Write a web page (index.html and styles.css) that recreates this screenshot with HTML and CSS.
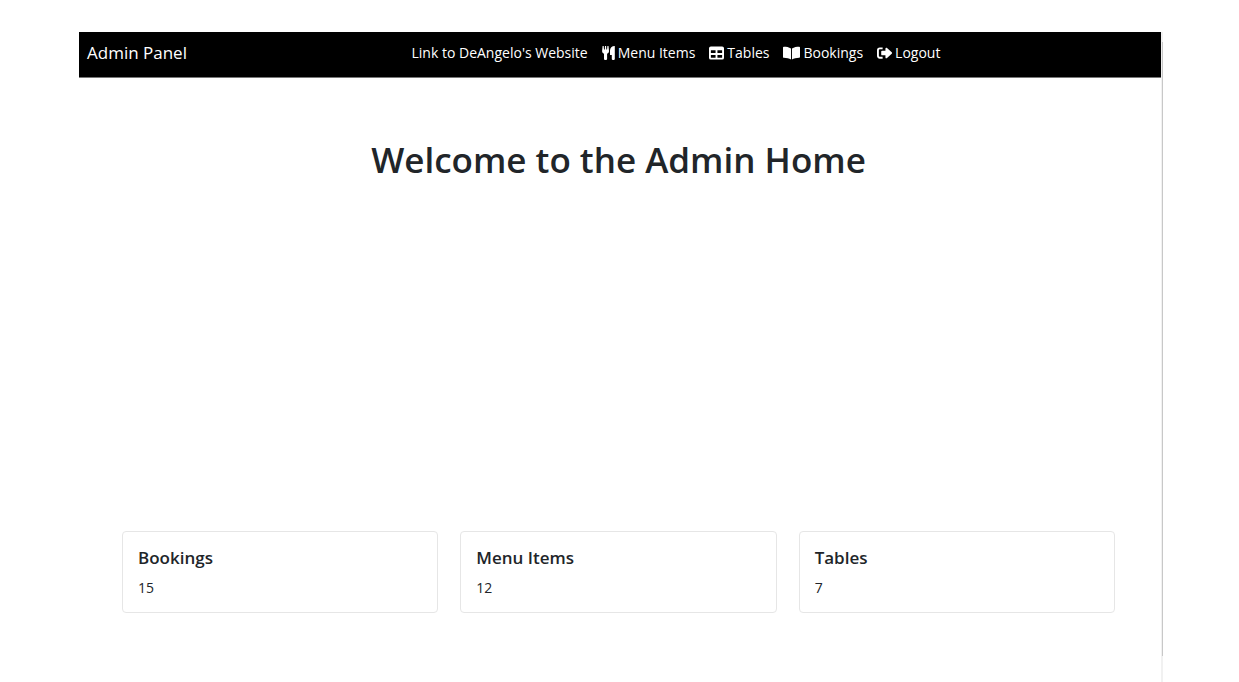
FILE: index.html
```html
<!DOCTYPE html>
<html lang="en">
<head>
<meta charset="utf-8">
<title>Admin Panel</title>
<link rel="stylesheet" href="styles.css">
</head>
<body>
<div class="frame">
  <div class="panel">
    <header class="navbar">
      <a class="brand" href="#">Admin Panel</a>
      <nav class="nav">
        <a class="nav-link" href="#">Link to DeAngelo's Website</a>
        <a class="nav-link" href="#">
          <svg class="icon icon-narrow" viewBox="0 0 13 16" aria-hidden="true"><path d="M.6 1h1.100l.3 3.500h.8L3 1h1.100l.2 3.500h.8L5.400 1h1.100l.5 5c0 1.300-.7 2.200-1.900 2.700V14c0 1.300-3.100 1.300-3.100 0V8.700C.8 8.200.1 7.300.1 6zM12.800 1v13c0 1.300-3 1.300-3 0v-4H8V5.500C8 3 9.800 1 12.800 1z"/></svg>
          <span>Menu Items</span>
        </a>
        <a class="nav-link" href="#">
          <svg class="icon" viewBox="0 0 16 16" aria-hidden="true"><path fill-rule="evenodd" d="M2 1h12a2 2 0 0 1 2 2v10a2 2 0 0 1-2 2H2a2 2 0 0 1-2-2V3a2 2 0 0 1 2-2zM2 5v3h5V5zM9 5v3h5V5zM2 10v3h5v-3zM9 10v3h5v-3z"/></svg>
          <span>Tables</span>
        </a>
        <a class="nav-link" href="#">
          <svg class="icon icon-wide" viewBox="0 0 18 16" aria-hidden="true"><path d="M8.500 3.200v11.600C6.500 13.600 3.900 13.200.9 13.100a.9.9 0 0 1-.9-.9V2.200c0-.5.4-.9.9-.9 2.500 0 5.400.4 7.600 1.900zM9.500 3.200c2.200-1.500 5.100-1.900 7.600-1.900.5 0 .9.4.9.9v10c0 .5-.4.9-.9.900-3 .1-5.600.5-7.600 1.700z"/></svg>
          <span>Bookings</span>
        </a>
        <a class="nav-link" href="#">
          <svg class="icon" viewBox="0 0 16 16" aria-hidden="true"><path d="M6 2v2H3a1 1 0 0 0-1 1v6a1 1 0 0 0 1 1h3v2H3a3 3 0 0 1-3-3V5a3 3 0 0 1 3-3zM15.700 7.300a1 1 0 0 1 0 1.400l-5 4.700c-.7.600-1.700.2-1.700-.7V10.500H5.500a1 1 0 0 1-1-1v-3a1 1 0 0 1 1-1H9V3.300c0-.9 1-1.300 1.700-.7z"/></svg>
          <span>Logout</span>
        </a>
      </nav>
    </header>
    <main class="content">
      <h1 class="title">Welcome to the Admin Home</h1>
      <section class="cards">
        <article class="card"><h2 class="card-title">Bookings</h2><p class="card-count">15</p></article>
        <article class="card"><h2 class="card-title">Menu Items</h2><p class="card-count">12</p></article>
        <article class="card"><h2 class="card-title">Tables</h2><p class="card-count">7</p></article>
      </section>
    </main>
  </div>
  <div class="track"><div class="thumb"></div></div>
</div>
</body>
</html>
```
FILE: styles.css
```css
* {
  box-sizing: border-box;
}

body {
  margin: 0;
  background: #fff;
  color: #212529;
  font-family: "Open Sans", "Noto Sans", sans-serif;
  font-size: 14px;
  line-height: 22px;
}

.frame {
  display: flex;
  min-height: 100vh;
  padding: 32px 76px 0 79px;
}

.panel {
  flex: 1;
  display: flex;
  flex-direction: column;
}

.navbar {
  display: flex;
  align-items: center;
  gap: 4px;
  padding: 10px 0 13px 8px;
  background: #000;
  border-bottom: 1px solid #777;
}

.brand,
.nav-link {
  color: #fff;
  text-decoration: none;
}

.brand {
  font-size: 17px;
}

.nav {
  flex: 1;
  display: flex;
  justify-content: center;
  gap: 14px;
}

.nav-link {
  display: flex;
  align-items: center;
  gap: 3px;
}

.icon {
  width: 15px;
  height: 16px;
  fill: currentColor;
}

.icon-narrow {
  width: 13px;
}

.icon-wide {
  width: 17px;
}

.content {
  flex: 1;
  display: flex;
  flex-direction: column;
  justify-content: space-between;
  padding: 60px 46px 69px 43px;
}

.title {
  margin: 0;
  font-size: 35px;
  font-weight: 600;
  line-height: 44px;
  text-align: center;
}

.cards {
  display: grid;
  grid-template-columns: repeat(3, 1fr);
  gap: 22px;
}

.card {
  padding: 15px 15px 13px;
  border: 1px solid #e6e6e6;
  border-radius: 4px;
}

.card-title {
  margin: 0 0 8px;
  font-size: 17px;
  font-weight: 600;
  line-height: 22px;
}

.card-count {
  margin: 0;
}

.track {
  width: 2px;
  padding: 10px 0 26px 1px;
  background: #f1f1f1;
}

.thumb {
  height: 100%;
  background: #c8c8c8;
}
```
